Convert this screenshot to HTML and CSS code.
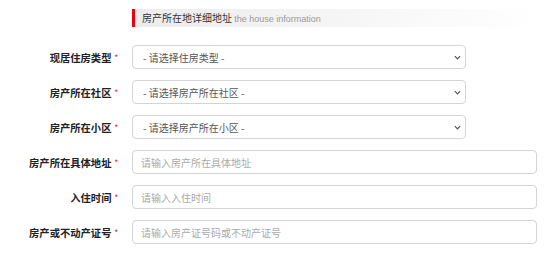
FILE: index.html
```html
<!DOCTYPE html>
<html lang="zh-CN">
<head>
    <meta charset="UTF-8">
    <meta name="viewport" content="width=device-width, initial-scale=1.0">
    <title>房产信息</title>
    <link rel="stylesheet" href="styles.css">
</head>
<body>
    <div class="house">
        <div class="house-title">
            <span class="cn">房产所在地详细地址</span>
            <span class="en">the house information</span>
        </div>
        <form class="house-form">
            <div class="row">
                <label class="label">现居住房类型<i class="req">*</i></label>
                <div class="sel-wrap">
                    <select class="ctl sel">
                        <option>- 请选择住房类型 -</option>
                    </select>
                    <svg class="arrow" viewBox="0 0 8 5" width="7" height="5"><path d="M1 1l3 3 3-3" fill="none" stroke="#555" stroke-width="1.4"/></svg>
                </div>
            </div>
            <div class="row">
                <label class="label">房产所在社区<i class="req">*</i></label>
                <div class="sel-wrap">
                    <select class="ctl sel">
                        <option>- 请选择房产所在社区 -</option>
                    </select>
                    <svg class="arrow" viewBox="0 0 8 5" width="7" height="5"><path d="M1 1l3 3 3-3" fill="none" stroke="#555" stroke-width="1.4"/></svg>
                </div>
            </div>
            <div class="row">
                <label class="label">房产所在小区<i class="req">*</i></label>
                <div class="sel-wrap">
                    <select class="ctl sel">
                        <option>- 请选择房产所在小区 -</option>
                    </select>
                    <svg class="arrow" viewBox="0 0 8 5" width="7" height="5"><path d="M1 1l3 3 3-3" fill="none" stroke="#555" stroke-width="1.4"/></svg>
                </div>
            </div>
            <div class="row">
                <label class="label">房产所在具体地址<i class="req">*</i></label>
                <input class="ctl txt" type="text" placeholder="请输入房产所在具体地址">
            </div>
            <div class="row">
                <label class="label">入住时间<i class="req">*</i></label>
                <input class="ctl txt" type="text" placeholder="请输入入住时间">
            </div>
            <div class="row">
                <label class="label">房产或不动产证号<i class="req">*</i></label>
                <input class="ctl txt" type="text" placeholder="请输入房产证号码或不动产证号">
            </div>
        </form>
    </div>
</body>
</html>
```

FILE: styles.css
```css
body {
    margin: 0;
    background: #fff;
    font-family: "Noto Sans CJK SC", "Liberation Sans", sans-serif;
    color: #333;
}
.house {
    padding-top: 9px;
}
/* 标题条 */
.house-title {
    margin-left: 132px;
    width: 408px;
    height: 18px;
    line-height: 18px;
    border-left: 3px solid #e60012;
    padding-left: 7px;
    background: linear-gradient(to right, #ececec, #fff);
    font-size: 10px;
    box-sizing: border-box;
    white-space: nowrap;
}
.house-title .cn {
    color: #333;
}
.house-title .en {
    color: #9a9a9a;
    font-family: "Liberation Sans", sans-serif;
    font-size: 9px;
}
.house-form {
    margin-top: 18px;
    display: flex;
    flex-direction: column;
    gap: 11px;
}
.row {
    display: grid;
    grid-template-columns: 118px auto;
    column-gap: 14px;
    align-items: center;
    height: 24px;
}
.label {
    text-align: right;
    font-size: 10.3px;
    font-weight: bold;
    color: #222;
    white-space: nowrap;
}
.req {
    font-style: normal;
    color: #e4393c;
    font-size: 7px;
    margin-left: 3px;
    vertical-align: 2px;
}
.ctl {
    display: block;
    height: 24px;
    box-sizing: border-box;
    border: 1px solid #d4d4d4;
    border-radius: 4px;
    background: #fff;
    font-family: "Noto Sans CJK SC", "Liberation Sans", sans-serif;
    font-size: 10px;
    outline: none;
}
.sel-wrap {
    position: relative;
    width: 334px;
    height: 24px;
}
.sel {
    width: 334px;
    padding: 0 10px;
    color: #555;
    appearance: none;
    -webkit-appearance: none;
}
.sel-wrap .arrow {
    position: absolute;
    right: 5px;
    top: 10px;
    pointer-events: none;
}
.txt {
    width: 405px;
    padding: 0 8px;
    color: #555;
}
.txt::placeholder {
    color: #aaa;
}
```
